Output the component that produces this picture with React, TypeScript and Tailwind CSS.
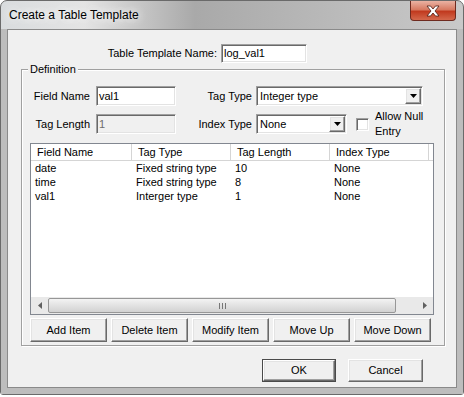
import React from "react";

const sunken =
  "border border-t-[#a0a0a0] border-l-[#a0a0a0] border-r-white border-b-white shadow-[inset_1px_1px_0_#696969,inset_-1px_-1px_0_#e3e3e3]";
const raised =
  "border border-t-white border-l-white border-r-[#696969] border-b-[#696969] shadow-[inset_-1px_-1px_0_#a0a0a0,inset_1px_1px_0_#e3e3e3]";

const rows = [
  ["date", "Fixed string type", "10", "None"],
  ["time", "Fixed string type", "8", "None"],
  ["val1", "Interger type", "1", "None"],
];

const cols = [
  { name: "Field Name", w: "w-[101px]" },
  { name: "Tag Type", w: "w-[99px]" },
  { name: "Tag Length", w: "w-[99px]" },
  { name: "Index Type", w: "w-[99px]" },
];

function DownArrow() {
  return (
    <svg width="7" height="4" viewBox="0 0 7 4">
      <path d="M0 0h7L3.5 4z" fill="#000" />
    </svg>
  );
}

function Combo({ value, width }: { value: string; width: string }) {
  return (
    <div className={`${sunken} ${width} h-[20px] bg-white flex items-center`}>
      <span className="flex-1 pl-[3px]">{value}</span>
      <div className={`${raised} bg-[#f0f0f0] w-[16px] h-[16px] mr-[1px] flex items-center justify-center`}>
        <DownArrow />
      </div>
    </div>
  );
}

function Btn({ label, className = "" }: { label: string; className?: string }) {
  return (
    <div className={`${raised} bg-[#f0f0f0] flex items-center justify-center ${className}`}>{label}</div>
  );
}

export default function App() {
  return (
    <div className="w-[464px] h-[397px] bg-white font-['Liberation_Sans',Arial,sans-serif] text-[11px] text-black leading-[13px]">
      <div className="w-[464px] h-[395px] rounded-t-[7px] rounded-b-[3px] border border-[#6a6a6a] bg-[linear-gradient(to_right,#d9dcde_0%,#e4e4e4_18%,#a9a9a9_42%,#b4b4b4_62%,#c9c9c9_100%)] flex flex-col">
        <div className="h-[28px] flex justify-between">
          <div className="pl-[8px] pt-[7px] text-[12px] leading-[15px] [text-shadow:0_0_8px_#fff,0_0_12px_#fff]">
            Create a Table Template
          </div>
          <div className="mr-[7px] w-[46px] h-[20px] rounded-b-[4px] border border-t-0 border-[#6e2a1f] bg-[linear-gradient(to_bottom,#eab2a3_0%,#d77a62_45%,#c13a1f_55%,#d4684c_100%)] flex items-center justify-center">
            <svg width="14" height="12" viewBox="0 0 14 12">
              <path
                d="M1 1h3.5L7 4l2.5-3H13L9 6l4 5H9.5L7 8l-2.5 3H1l4-5z"
                fill="#fff"
                stroke="#4a1a12"
                strokeWidth="0.8"
              />
            </svg>
          </div>
        </div>
        <div className="flex-1 px-[6px] pb-[6px] bg-[#bdbdbd]">
          <div className="h-[359px] border border-[#8a8a8a] bg-[#f0f0f0] pl-[13px] pt-[14px] flex flex-col">
            <div className="flex items-center h-[19px]">
              <span className="w-[196px] text-right">Table Template Name:</span>
              <div className={`${sunken} ml-[4px] w-[86px] h-[19px] bg-white pl-[2px] flex items-center`}>log_val1</div>
            </div>

            <div className="relative mt-[6px] w-[424px] h-[277px] border border-[#a0a0a0] shadow-[inset_1px_1px_0_#fff,1px_1px_0_#fff] flex flex-col">
              <span className="absolute -top-[7px] left-[6px] px-[2px] bg-[#f0f0f0]">Definition</span>

              <div className="flex items-center mt-[16px] h-[20px]">
                <span className="w-[68px] text-right">Field Name</span>
                <div className={`${sunken} ml-[6px] w-[80px] h-[20px] bg-white pl-[2px] flex items-center`}>val1</div>
                <span className="w-[76px] text-right">Tag Type</span>
                <div className="ml-[4px]">
                  <Combo value="Integer type" width="w-[167px]" />
                </div>
              </div>

              <div className="flex items-center mt-[8px] h-[20px]">
                <span className="w-[68px] text-right">Tag Length</span>
                <div className={`${sunken} ml-[6px] w-[80px] h-[20px] bg-[#f0f0f0] text-[#6d6d6d] pl-[2px] flex items-center`}>
                  1
                </div>
                <span className="w-[76px] text-right">Index Type</span>
                <div className="ml-[4px]">
                  <Combo value="None" width="w-[91px]" />
                </div>
                <div className={`${sunken} ml-[9px] w-[13px] h-[13px] bg-white`} />
                <div className="ml-[6px] leading-[15px]">
                  <div>Allow Null</div>
                  <div>Entry</div>
                </div>
              </div>

              <div className="ml-[8px] mt-[9px] w-[404px] h-[172px] border border-[#828790] bg-white flex flex-col">
                <div className="flex h-[17px] border-b border-[#d5d5d5]">
                  {cols.map((c) => (
                    <div key={c.name} className={`${c.w} border-r border-[#d5d5d5] pl-[6px] flex items-center`}>
                      {c.name}
                    </div>
                  ))}
                </div>
                <div className="flex-1 flex flex-col">
                  {rows.map((r) => (
                    <div key={r[0]} className="flex h-[14px] items-center">
                      {r.map((v, i) => (
                        <div key={i} className={`${cols[i].w} pl-[4px]`}>
                          {v}
                        </div>
                      ))}
                    </div>
                  ))}
                </div>
                <div className="h-[17px] flex items-center bg-[#e9e9e9]">
                  <div className="w-[17px] h-[17px] flex items-center justify-center">
                    <svg width="4" height="7" viewBox="0 0 4 7">
                      <path d="M4 0v7L0 3.5z" fill="#606060" />
                    </svg>
                  </div>
                  <div className="w-[348px] h-[15px] rounded-[2px] border border-[#979797] bg-[linear-gradient(to_bottom,#f3f3f3,#e2e2e2_50%,#d2d2d2)] flex items-center justify-center">
                    <svg width="7" height="6" viewBox="0 0 7 6">
                      <path d="M0.5 0v6M3.5 0v6M6.5 0v6" stroke="#777" strokeWidth="1" />
                    </svg>
                  </div>
                  <div className="flex-1" />
                  <div className="w-[17px] h-[17px] flex items-center justify-center">
                    <svg width="4" height="7" viewBox="0 0 4 7">
                      <path d="M0 0v7L4 3.5z" fill="#606060" />
                    </svg>
                  </div>
                </div>
              </div>

              <div className="ml-[8px] mt-[3px] flex gap-[4px]">
                <Btn label="Add Item" className="w-[77px] h-[24px]" />
                <Btn label="Delete Item" className="w-[77px] h-[24px]" />
                <Btn label="Modify Item" className="w-[77px] h-[24px]" />
                <Btn label="Move Up" className="w-[77px] h-[24px]" />
                <Btn label="Move Down" className="w-[77px] h-[24px]" />
              </div>
            </div>

            <div className="mt-[13px] pl-[241px] flex gap-[12px]">
              <div className="border border-[#4a4a4a]">
                <Btn label="OK" className="w-[72px] h-[21px]" />
              </div>
              <Btn label="Cancel" className="w-[75px] h-[23px]" />
            </div>
          </div>
        </div>
      </div>
    </div>
  );
}
